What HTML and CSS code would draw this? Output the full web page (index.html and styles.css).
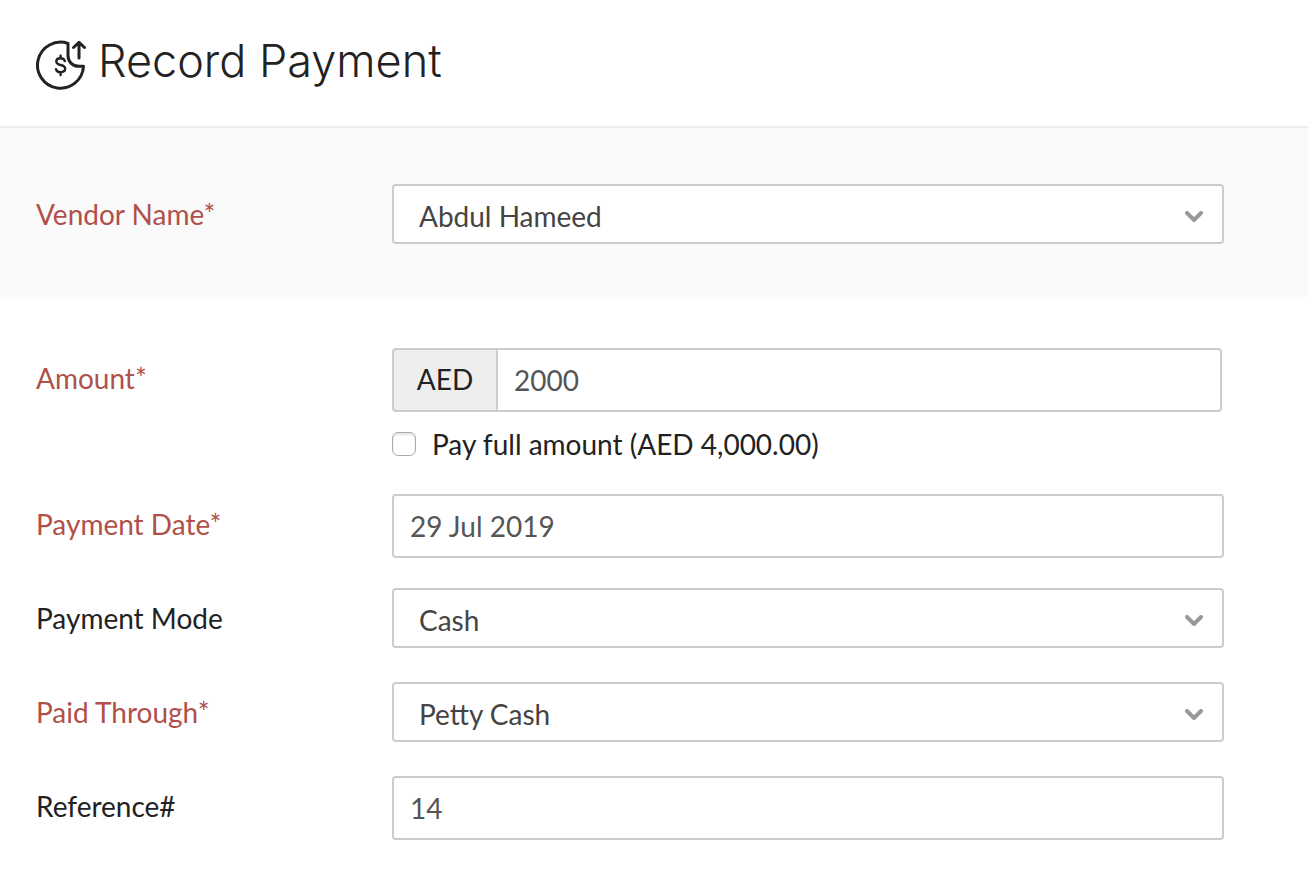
FILE: index.html
```html
<!DOCTYPE html>
<html lang="en">
<head>
    <meta charset="UTF-8">
    <meta name="viewport" content="width=device-width, initial-scale=1.0">
    <title>Record Payment</title>
    <link rel="stylesheet" href="styles.css">
</head>
<body>
    <header class="page-header">
        <svg class="header-icon" viewBox="0 0 52 52" aria-hidden="true">
            <path d="M32 3.4 A23 23 0 1 0 47.5 26.3 H43 C36 26.3 32 21.5 32 15.5 Z"/>
            <path d="M43 18 V3 M37.5 7.5 L43 2.4 L48.5 7.5"/>
            <path class="dollar" d="M28.8 21 C28.3 19 26.7 18.2 24.6 18.2 C22 18.2 20.3 19.4 20.3 21.4 C20.3 26.2 29.2 23.8 29.2 28.6 C29.2 30.8 27.3 32.2 24.6 32.2 C22.1 32.2 20.5 31.2 20 29.2 M24.6 15.6 V18 M24.6 32.2 V35"/>
        </svg>
        <h1>Record Payment</h1>
    </header>

    <form>
        <section class="vendor-section">
            <div class="form-row">
                <label class="required" for="vendor">Vendor Name*</label>
                <div class="select-box">
                    <select id="vendor"><option>Abdul Hameed</option></select>
                    <svg class="chevron" viewBox="0 0 18 12" aria-hidden="true"><path d="M2 2 L9 9 L16 2"/></svg>
                </div>
            </div>
        </section>

        <section class="payment-section">
            <div class="form-row">
                <label class="required" for="amount">Amount*</label>
                <div>
                    <div class="amount-group">
                        <span class="currency">AED</span>
                        <input class="amount-input" type="text" id="amount" value="2000">
                    </div>
                    <div class="pay-full">
                        <input type="checkbox" id="pay-full">
                        <label for="pay-full">Pay full amount (AED 4,000.00)</label>
                    </div>
                </div>
            </div>
            <div class="form-row">
                <label class="required" for="date">Payment Date*</label>
                <input class="text-input" type="text" id="date" value="29 Jul 2019">
            </div>
            <div class="form-row">
                <label for="mode">Payment Mode</label>
                <div class="select-box">
                    <select id="mode"><option>Cash</option></select>
                    <svg class="chevron" viewBox="0 0 18 12" aria-hidden="true"><path d="M2 2 L9 9 L16 2"/></svg>
                </div>
            </div>
            <div class="form-row">
                <label class="required" for="paid-through">Paid Through*</label>
                <div class="select-box">
                    <select id="paid-through"><option>Petty Cash</option></select>
                    <svg class="chevron" viewBox="0 0 18 12" aria-hidden="true"><path d="M2 2 L9 9 L16 2"/></svg>
                </div>
            </div>
            <div class="form-row">
                <label for="reference">Reference#</label>
                <input class="text-input" type="text" id="reference" value="14">
            </div>
        </section>
    </form>
</body>
</html>
```

FILE: styles.css
```css
* {
    box-sizing: border-box;
}
body {
    margin: 0;
    background: #fff;
    color: #222;
    font-family: Lato, "Open Sans", sans-serif;
    font-size: 28px;
}
.page-header {
    display: flex;
    align-items: flex-start;
    gap: 10px;
    padding: 30px 36px 34px;
    border-bottom: 2px solid #ededed;
}
.header-icon {
    width: 52px;
    height: 52px;
    margin-top: 10px;
    fill: none;
    stroke: #222;
    stroke-width: 3;
    stroke-linejoin: round;
    stroke-linecap: round;
}
.header-icon .dollar {
    stroke-width: 2.4;
}
h1 {
    margin: 0;
    font-family: Inter, sans-serif;
    font-size: 45px;
    font-weight: 300;
    line-height: 62px;
}
.vendor-section {
    padding: 56px 84px 49px 36px;
    background: #fafafa;
}
.payment-section {
    display: grid;
    gap: 30px;
    padding: 51px 84px 40px 36px;
}
.form-row {
    display: grid;
    grid-template-columns: 356px 1fr;
    align-items: start;
    min-height: 64px;
    line-height: 60px;
}
.required {
    color: #b0504b;
}
input,
select {
    font: inherit;
}
.text-input,
.amount-input,
select {
    width: 100%;
    min-width: 0;
    border: 2px solid #ccc;
    border-radius: 4px;
    background: #fff;
    color: #555;
}
.text-input,
.amount-input {
    height: 64px;
    padding: 0 16px;
}
.select-box {
    position: relative;
    display: grid;
}
select {
    height: 60px;
    padding: 0 60px 4px 25px;
    appearance: none;
    color: #444;
}
/* arrow lies over the select */
.chevron {
    position: absolute;
    top: 27px;
    right: 21px;
    width: 18px;
    height: 12px;
    fill: none;
    stroke: #999;
    stroke-width: 4;
    stroke-linecap: round;
    stroke-linejoin: round;
    pointer-events: none;
}
.amount-group {
    display: flex;
    padding-right: 2px;
}
.currency {
    flex-shrink: 0;
    width: 104px;
    border: 2px solid #ccc;
    border-right: 0;
    border-radius: 4px 0 0 4px;
    background: #eee;
    line-height: 58px;
    text-align: center;
}
.amount-input {
    border-radius: 0 4px 4px 0;
}
.pay-full {
    display: flex;
    align-items: center;
    gap: 16px;
    margin-top: 12px;
    line-height: 40px;
}
.pay-full input {
    width: 24px;
    height: 24px;
    margin: 0;
    appearance: none;
    border: 1px solid #aaa;
    border-radius: 6px;
    background: #fff;
    box-shadow: inset 0 2px 2px #e4e4e4;
}
.pay-full input:checked {
    background: #408dfb;
}
```
